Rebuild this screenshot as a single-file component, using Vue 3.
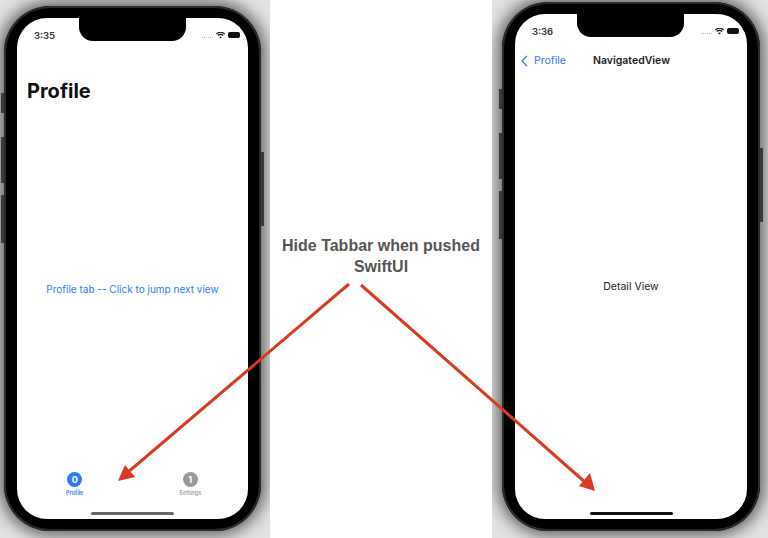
<script setup>
const tabs = [
  { id: 0, label: 'Profile', active: true },
  { id: 1, label: 'Settings', active: false }
]
</script>

<template>
  <div class="page">
    <section class="panel panel-left">
      <div class="phone">
        <i class="btn btn-mute"></i>
        <i class="btn btn-up"></i>
        <i class="btn btn-down"></i>
        <i class="btn btn-power"></i>
        <div class="screen">
          <div class="notch"></div>
          <div class="status">
            <span class="time">3:35</span>
            <span class="status-icons">
              <span class="dots"></span>
              <svg class="wifi" viewBox="0 0 16 12"><path d="M8 11.5 5.6 8.8a3.4 3.4 0 0 1 4.8 0ZM3.9 7 2.4 5.3a8 8 0 0 1 11.2 0L12.100 7a5.800 5.800 0 0 0-8.200 0ZM1.200 4 0 2.600a11.500 11.500 0 0 1 16 0L14.800 4A9.800 9.800 0 0 0 1.200 4Z"/></svg>
              <span class="battery"></span>
            </span>
          </div>
          <h1 class="large-title">Profile</h1>
          <main class="content">
            <a class="link">Profile tab -- Click to jump next view</a>
          </main>
          <nav class="tabbar">
            <div v-for="tab in tabs" :key="tab.id" class="tab" :class="{ active: tab.active }">
              <span class="tab-badge">{{ tab.id }}</span>
              <span class="tab-label">{{ tab.label }}</span>
            </div>
          </nav>
          <div class="home-wrap"><div class="home home-gray"></div></div>
        </div>
      </div>
    </section>

    <section class="caption">
      <p>Hide Tabbar when pushed<br />SwiftUI</p>
    </section>

    <section class="panel panel-right">
      <div class="phone phone-right">
        <i class="btn btn-mute"></i>
        <i class="btn btn-up"></i>
        <i class="btn btn-down"></i>
        <i class="btn btn-power"></i>
        <div class="screen">
          <div class="notch"></div>
          <div class="status">
            <span class="time">3:36</span>
            <span class="status-icons">
              <span class="dots"></span>
              <svg class="wifi" viewBox="0 0 16 12"><path d="M8 11.5 5.6 8.8a3.4 3.4 0 0 1 4.8 0ZM3.9 7 2.4 5.3a8 8 0 0 1 11.2 0L12.100 7a5.800 5.800 0 0 0-8.200 0ZM1.200 4 0 2.600a11.500 11.500 0 0 1 16 0L14.800 4A9.800 9.800 0 0 0 1.200 4Z"/></svg>
              <span class="battery"></span>
            </span>
          </div>
          <div class="navbar">
            <span class="back">
              <svg class="chevron" viewBox="0 0 8 14"><path d="M6.800 1 1.200 7l5.600 6" /></svg>
              Profile
            </span>
            <span class="nav-title">NavigatedView</span>
          </div>
          <main class="content">
            <span class="detail">Detail View</span>
          </main>
          <div class="home-wrap"><div class="home"></div></div>
        </div>
      </div>
    </section>

    <svg class="arrows" viewBox="0 0 768 538">
      <path class="shaft" d="M349 284 127 473" />
      <path class="head" d="M118 481 125 465 135 477Z" />
      <path class="shaft" d="M361 285 586 483" />
      <path class="head" d="M595 491 579 486 590 473Z" />
    </svg>
  </div>
</template>

<style>
body {
  background: #fff;
}
</style>

<style scoped>
.page,
.page * {
  box-sizing: border-box;
}

.page {
  position: relative;
  display: flex;
  width: 768px;
  height: 538px;
  overflow: hidden;
  background: #fff;
  font-family: Inter, 'Liberation Sans', sans-serif;
}

.panel {
  overflow: hidden;
  height: 538px;
  flex: none;
  background: #e2e2e2;
}

.panel-left {
  width: 270px;
  padding: 6px 0 0 4px;
}

.panel-right {
  width: 276px;
  padding: 2px 0 0 10px;
}

.phone {
  position: relative;
  width: 257px;
  height: 525px;
  padding: 12px 13px;
  background: #000;
  border-radius: 46px;
  box-shadow: inset 0 0 0 2px #2b2b2b, 0 0 16px 4px rgba(0, 0, 0, 0.6);
}

.phone-right {
  width: 258px;
  height: 529px;
}

.btn {
  position: absolute;
  background: #3a3a3a;
  width: 3px;
  left: -3px;
}

.btn-mute {
  top: 87px;
  height: 20px;
}

.btn-up {
  top: 131px;
  height: 46px;
}

.btn-down {
  top: 189px;
  height: 48px;
}

.btn-power {
  left: auto;
  right: -3px;
  top: 146px;
  height: 74px;
}

.screen {
  position: relative;
  display: flex;
  flex-direction: column;
  height: 100%;
  background: #fff;
  border-radius: 30px;
  overflow: hidden;
}

.notch {
  position: absolute;
  top: 0;
  left: 62px;
  width: 107px;
  height: 23px;
  background: #000;
  border-radius: 0 0 14px 14px;
}

.status {
  display: flex;
  justify-content: space-between;
  align-items: center;
  height: 34px;
  padding: 0 8px 0 17px;
  flex: none;
}

.time {
  font-size: 9.500px;
  font-weight: 600;
  color: #333;
}

.status-icons {
  display: flex;
  align-items: center;
  gap: 3px;
}

.dots {
  width: 11px;
  border-top: 1px dotted #bbb;
  margin-top: 4px;
}

.wifi {
  width: 9px;
  height: 7px;
  fill: #111;
}

.battery {
  width: 12px;
  height: 6px;
  border-radius: 2px;
  background: #111;
}

.large-title {
  margin: 0;
  padding: 26px 0 0 10px;
  height: 53px;
  flex: none;
  font-size: 20px;
  line-height: 27px;
  font-weight: 700;
  color: #111;
}

.content {
  flex: 1;
  display: flex;
  align-items: center;
  justify-content: center;
}

.link {
  font-size: 10px;
  color: #3478f6;
}

.tabbar {
  display: flex;
  flex: none;
  height: 30px;
}

.tab {
  flex: 1;
  display: flex;
  flex-direction: column;
  align-items: center;
  color: #a0a0a0;
}

.tab.active {
  color: #3478f6;
}

.tab-badge {
  width: 15px;
  height: 15px;
  border-radius: 50%;
  background: #999;
  color: #fff;
  font-size: 9px;
  font-weight: 700;
  line-height: 15px;
  text-align: center;
}

.tab.active .tab-badge {
  background: #2f7bf6;
}

.tab-label {
  margin-top: 3px;
  font-size: 5.500px;
  font-weight: 600;
}

.home-wrap {
  height: 17px;
  flex: none;
  padding-top: 10px;
}

.home {
  width: 83px;
  height: 3px;
  margin: 0 auto;
  border-radius: 2px;
  background: #111;
}

.home-gray {
  background: #666;
}

.phone-right .home-wrap {
  height: 20px;
  padding-top: 13px;
}

.navbar {
  position: relative;
  display: flex;
  justify-content: center;
  align-items: center;
  height: 25px;
  flex: none;
}

.back {
  position: absolute;
  left: 6px;
  display: flex;
  align-items: center;
  gap: 6px;
  font-size: 10.500px;
  color: #3478f6;
}

.chevron {
  width: 7px;
  height: 12px;
  fill: none;
  stroke: #3478f6;
  stroke-width: 1.600;
}

.nav-title {
  margin-left: 1px;
  font-size: 10.500px;
  font-weight: 600;
  color: #222;
}

.detail {
  font-size: 10.500px;
  color: #222;
}

.caption {
  width: 222px;
  flex: none;
  padding-top: 235px;
  text-align: center;
}

.caption p {
  margin: 0;
  font-family: 'Liberation Sans', sans-serif;
  font-size: 16px;
  font-weight: 700;
  line-height: 21px;
  color: #555;
}

.arrows {
  position: absolute;
  inset: 0;
  width: 768px;
  height: 538px;
  pointer-events: none;
}

.shaft {
  fill: none;
  stroke: #d93a26;
  stroke-width: 3;
}

.head {
  fill: #d93a26;
}
</style>
